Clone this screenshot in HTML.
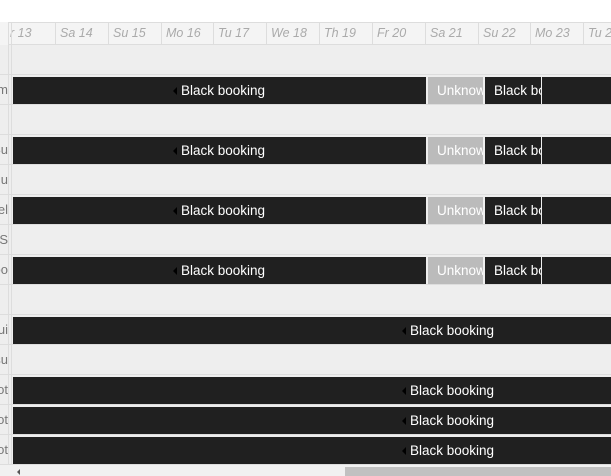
<!DOCTYPE html><html><head><style>
body{margin:0;width:611px;height:476px;overflow:hidden;background:#fff;font-family:"Liberation Sans",sans-serif;position:relative}
.a{position:absolute}
.hd{top:22px;left:0;width:611px;height:23px;background:#f4f4f4;border-top:1px solid #ddd;border-bottom:1px solid #ddd;box-sizing:border-box}
.day{position:absolute;top:22px;height:23px;line-height:23px;font-size:12.5px;font-style:italic;color:#aaa;border-left:1px solid #ddd;padding-left:4px;box-sizing:border-box;width:53px}
.row{position:absolute;left:0;width:611px;height:30px;background:#eee;border-bottom:1px solid #ddd;box-sizing:border-box}
.lab{position:absolute;left:0;width:8px;overflow:hidden;font-size:13px;color:#777;text-align:right;direction:rtl;white-space:nowrap;line-height:30px}
.bar{position:absolute;height:27px;background:#202020;color:#fff;font-size:13.5px;line-height:27px;overflow:hidden;white-space:nowrap}
.tri{display:inline-block;width:0;height:0;border-top:4px solid transparent;border-bottom:4px solid transparent;border-right:4px solid #000;margin-right:4px;vertical-align:middle}
</style></head><body>
<div class="a hd"></div>
<div class="day" style="left:3px;padding-left:6px">r 13</div>
<div class="day" style="left:55px">Sa 14</div>
<div class="day" style="left:108px">Su 15</div>
<div class="day" style="left:161px">Mo 16</div>
<div class="day" style="left:213px">Tu 17</div>
<div class="day" style="left:266px">We 18</div>
<div class="day" style="left:319px">Th 19</div>
<div class="day" style="left:372px">Fr 20</div>
<div class="day" style="left:425px">Sa 21</div>
<div class="day" style="left:478px">Su 22</div>
<div class="day" style="left:530px">Mo 23</div>
<div class="day" style="left:583px">Tu 24</div>
<div class="a" style="left:0;top:22px;width:9px;height:23px;background:#f4f4f4;border-bottom:1px solid #ddd"></div>
<div class="row" style="top:45px"></div>
<div class="row" style="top:75px"></div>
<div class="row" style="top:105px"></div>
<div class="row" style="top:135px"></div>
<div class="row" style="top:165px"></div>
<div class="row" style="top:195px"></div>
<div class="row" style="top:225px"></div>
<div class="row" style="top:255px"></div>
<div class="row" style="top:285px"></div>
<div class="row" style="top:315px"></div>
<div class="row" style="top:345px"></div>
<div class="row" style="top:375px"></div>
<div class="row" style="top:405px"></div>
<div class="row" style="top:435px"></div>
<div class="a" style="left:8px;top:22px;width:1px;height:443px;background:#ddd"></div>
<div class="a" style="left:11px;top:22px;width:1px;height:443px;background:#ddd"></div>
<div class="lab" style="top:75px">m</div>
<div class="lab" style="top:135px">Su</div>
<div class="lab" style="top:165px">u</div>
<div class="lab" style="top:195px">el</div>
<div class="lab" style="top:225px">S</div>
<div class="lab" style="top:255px">oo</div>
<div class="lab" style="top:315px">ui</div>
<div class="lab" style="top:345px">su</div>
<div class="lab" style="top:375px">ot</div>
<div class="lab" style="top:405px">ot</div>
<div class="lab" style="top:435px">ot</div>

<div class="bar" style="left:13px;top:77px;width:413px;padding-left:160px;box-sizing:border-box"><span class="tri"></span>Black booking</div>
<div class="bar" style="left:428px;top:77px;width:55px;background:#bbb;padding-left:9px;box-sizing:border-box">Unknown</div>
<div class="bar" style="left:485px;top:77px;width:56px;padding-left:9px;box-sizing:border-box">Black booking</div>
<div class="bar" style="left:542px;top:77px;width:69px"></div>

<div class="bar" style="left:13px;top:137px;width:413px;padding-left:160px;box-sizing:border-box"><span class="tri"></span>Black booking</div>
<div class="bar" style="left:428px;top:137px;width:55px;background:#bbb;padding-left:9px;box-sizing:border-box">Unknown</div>
<div class="bar" style="left:485px;top:137px;width:56px;padding-left:9px;box-sizing:border-box">Black booking</div>
<div class="bar" style="left:542px;top:137px;width:69px"></div>

<div class="bar" style="left:13px;top:197px;width:413px;padding-left:160px;box-sizing:border-box"><span class="tri"></span>Black booking</div>
<div class="bar" style="left:428px;top:197px;width:55px;background:#bbb;padding-left:9px;box-sizing:border-box">Unknown</div>
<div class="bar" style="left:485px;top:197px;width:56px;padding-left:9px;box-sizing:border-box">Black booking</div>
<div class="bar" style="left:542px;top:197px;width:69px"></div>

<div class="bar" style="left:13px;top:257px;width:413px;padding-left:160px;box-sizing:border-box"><span class="tri"></span>Black booking</div>
<div class="bar" style="left:428px;top:257px;width:55px;background:#bbb;padding-left:9px;box-sizing:border-box">Unknown</div>
<div class="bar" style="left:485px;top:257px;width:56px;padding-left:9px;box-sizing:border-box">Black booking</div>
<div class="bar" style="left:542px;top:257px;width:69px"></div>

<div class="bar" style="left:13px;top:317px;width:598px;padding-left:389px;box-sizing:border-box"><span class="tri"></span>Black booking</div>
<div class="bar" style="left:13px;top:377px;width:598px;padding-left:389px;box-sizing:border-box"><span class="tri"></span>Black booking</div>
<div class="bar" style="left:13px;top:407px;width:598px;padding-left:389px;box-sizing:border-box"><span class="tri"></span>Black booking</div>
<div class="bar" style="left:13px;top:437px;width:598px;padding-left:389px;box-sizing:border-box"><span class="tri"></span>Black booking</div>

<div class="a" style="left:0;top:465px;width:611px;height:11px;background:#f1f1f1"></div>
<div class="a" style="left:345px;top:467px;width:266px;height:9px;background:#c1c1c1"></div>
<div class="a" style="left:17px;top:469px;width:0;height:0;border-top:3px solid transparent;border-bottom:3px solid transparent;border-right:3px solid #555"></div>
</body></html>
